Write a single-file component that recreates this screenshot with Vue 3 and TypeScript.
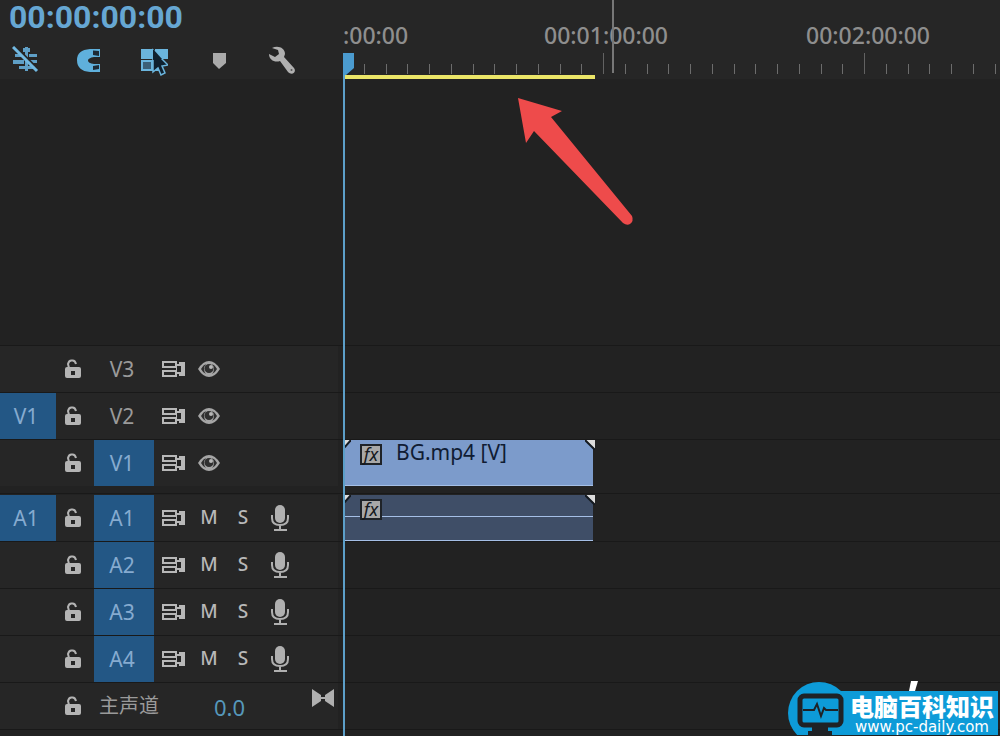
<script setup lang="ts">
interface Track {
  name: string
  kind: 'video' | 'audio'
  source?: string
  targeted: boolean
  clip?: string
  hasClip?: boolean
}

const videoTracks: Track[] = [
  { name: 'V3', kind: 'video', targeted: false },
  { name: 'V2', kind: 'video', source: 'V1', targeted: false },
  { name: 'V1', kind: 'video', targeted: true, hasClip: true, clip: 'BG.mp4 [V]' },
]

const audioTracks: Track[] = [
  { name: 'A1', kind: 'audio', source: 'A1', targeted: true, hasClip: true },
  { name: 'A2', kind: 'audio', targeted: true },
  { name: 'A3', kind: 'audio', targeted: true },
  { name: 'A4', kind: 'audio', targeted: true },
]

const groups = [
  { id: 'video', tracks: videoTracks },
  { id: 'audio', tracks: audioTracks },
]

const rulerLabels = [':00:00', '00:01:00:00', '00:02:00:00']

// Twelve divisions per minute, one minute is 261 units wide
const ticks = Array.from({ length: 110 }, (_, i) => ({
  x: Math.round(((i + 1) * 261) / 12) - 1,
  major: (i + 1) % 12 === 0,
}))
</script>

<template>
  <main class="timeline">
    <header class="top">
      <div class="controls">
        <div class="timecode">00:00:00:00</div>
        <div class="toolbar">
          <button type="button" aria-label="Insert as nests">
            <svg width="28" height="28" viewBox="0 0 28 28">
              <g fill="#5f9fc6">
                <rect x="13" y="1" width="3" height="24" />
                <rect x="11" y="2" width="7" height="4" />
                <rect x="3" y="8" width="7" height="3" />
                <rect x="17" y="8" width="8" height="3" />
                <rect x="1" y="14" width="11" height="4" />
                <rect x="17" y="14" width="8" height="3" />
                <rect x="7" y="20" width="16" height="3" />
              </g>
              <path d="M4 1 28 25" stroke="#262626" stroke-width="2" />
              <path d="M1 1 25 25" stroke="#72b9e2" stroke-width="3" />
            </svg>
          </button>
          <button type="button" aria-label="Snap">
            <svg width="28" height="28" viewBox="0 0 28 28">
              <path d="M24 3H14Q1 4 1 14Q1 25 14 26H24V18H18Q12 17 12 14.500Q12 12 18 11H24Z" fill="#5fb0dc" />
              <path d="M17 4.500 23 5V10L17 9ZM17 20 23 19V23L17 24Z" fill="#1d2a35" />
            </svg>
          </button>
          <button type="button" aria-label="Linked selection">
            <svg width="28" height="30" viewBox="0 0 28 30">
              <path d="M1 3H14V13H1ZM15 3H28V13H15Z" fill="#6bb5dd" />
              <path d="M2 15H12V24H2Z" fill="#3c6077" stroke="#6bb5dd" stroke-width="2" />
              <path d="M13 14H20V25H13Z" fill="#6bb5dd" />
              <path d="M13 4V26L18 22L21 29L25 27L22 20L28 19Z" fill="#10212f" stroke="#6bb5dd" stroke-width="1.500" />
              <path d="M13 3V14L22 13Z" fill="#10212f" />
            </svg>
          </button>
          <button type="button" aria-label="Add marker">
            <svg width="28" height="28" viewBox="0 0 28 28">
              <path d="M9 7H22V17L15 23L9 17Z" fill="#aaaaaa" />
            </svg>
          </button>
          <button type="button" aria-label="Timeline settings">
            <svg width="28" height="28" viewBox="0 0 28 28">
              <path
                d="M4 2C10-1 17 2 17 8L16 11L26 22C29 26 24 30 20 26L12 15C7 17 1 14 1 8L7 11L11 8L10 4Z"
                fill="#b0b0b0"
              />
              <circle cx="23.500" cy="24" r="1" fill="#555555" />
            </svg>
          </button>
        </div>
      </div>
      <div class="ruler">
        <div class="labels">
          <span v-for="label in rulerLabels" :key="label">{{ label }}</span>
        </div>
        <svg class="ticks" height="22" aria-hidden="true">
          <rect
            v-for="tick in ticks"
            :key="tick.x"
            :x="tick.x"
            :y="tick.major ? 1 : 12"
            width="1"
            :height="tick.major ? 21 : 10"
            :fill="tick.major ? '#626262' : '#6c6c6c'"
          />
        </svg>
        <div class="work-area"></div>
        <div class="hover-line"></div>
      </div>
    </header>

    <div class="empty"></div>

    <section v-for="group in groups" :key="group.id" class="group">
      <div v-for="track in group.tracks" :key="track.name" class="row">
        <div class="head">
          <button v-if="track.source" type="button" class="source">{{ track.source }}</button>
          <span v-else></span>
          <button type="button" class="tool" aria-label="Lock track">
            <svg width="16" height="20" viewBox="0 0 16 20">
              <path d="M4 9L3 5Q4 1 7 1.500Q10 1 11 5" fill="none" stroke="#b4b4b4" stroke-width="2" />
              <path fill-rule="evenodd" d="M2 8H14Q16 8 16 10V17Q16 19 14 19H2Q0 19 0 17V10Q0 8 2 8ZM6 12V16H10V12Z" fill="#b4b4b4" />
            </svg>
          </button>
          <button type="button" class="target" :class="{ on: track.targeted }">{{ track.name }}</button>
          <button type="button" class="tool" aria-label="Sync lock">
            <svg width="24" height="18" viewBox="0 0 24 18">
              <path d="M2 2H15V7H2ZM2 11H15V16H2Z" fill="none" stroke="#b8b8b8" stroke-width="2" />
              <path fill-rule="evenodd" d="M15 4H18V2H24V16H18V14H15ZM16 6V12H20V6Z" fill="#b8b8b8" />
            </svg>
          </button>
          <template v-if="track.kind === 'video'">
            <button type="button" class="tool" aria-label="Toggle track output">
              <svg width="24" height="18" viewBox="0 0 24 18">
                <path d="M1 9Q6 1 12 1Q18 1 23 9Q18 17 12 17Q6 17 1 9Z" fill="#a6a6a6" />
                <path d="M4 9Q6 5 9 4Q5 9 9 14Q6 13 4 9ZM20 9Q18 5 15 4Q19 9 15 14Q18 13 20 9Z" fill="#303030" />
                <circle cx="12" cy="8.500" r="4.500" fill="#303030" />
                <circle cx="14" cy="7" r="2" fill="#b8b8b8" />
              </svg>
            </button>
          </template>
          <template v-else>
            <button type="button" class="tool letter">M</button>
            <button type="button" class="tool letter">S</button>
            <button type="button" class="tool" aria-label="Voice-over record">
              <svg width="18" height="28" viewBox="0 0 18 28">
                <rect x="4" y="1" width="10" height="18" rx="5" fill="#b0b0b0" />
                <path d="M1 11V14Q1 21 9 21Q17 21 17 14V11M9 21V26M3 26H16" fill="none" stroke="#b0b0b0" stroke-width="2" />
              </svg>
            </button>
          </template>
        </div>
        <div class="lane">
          <div v-if="track.hasClip" class="clip" :class="track.kind">
            <span class="fx">fx</span>
            <span v-if="track.clip" class="clip-name">{{ track.clip }}</span>
            <svg class="corner start" width="7" height="8" viewBox="0 0 7 8">
              <path d="M0 0H6L0 7Z" fill="#dcdcdc" />
              <path d="M7 0 0 8" stroke="#151a20" stroke-width="2" />
            </svg>
            <svg class="corner end" width="10" height="10" viewBox="0 0 10 10">
              <path d="M1 0H10V9Z" fill="#dcdcdc" />
              <path d="M0 0 10 10" stroke="#151a20" stroke-width="2" />
            </svg>
          </div>
        </div>
      </div>
    </section>

    <div class="row master">
      <div class="head">
        <span></span>
        <button type="button" class="tool" aria-label="Lock master track">
          <svg width="16" height="20" viewBox="0 0 16 20">
            <path d="M4 9L3 5Q4 1 7 1.500Q10 1 11 5" fill="none" stroke="#b4b4b4" stroke-width="2" />
            <path fill-rule="evenodd" d="M2 8H14Q16 8 16 10V17Q16 19 14 19H2Q0 19 0 17V10Q0 8 2 8ZM6 12V16H10V12Z" fill="#b4b4b4" />
          </svg>
        </button>
        <span class="master-name">主声道</span>
        <span class="level">0.0</span>
        <button type="button" class="tool meter" aria-label="Show keyframes">
          <svg width="22" height="18" viewBox="0 0 22 18">
            <path d="M0 0 9 6V12L0 18ZM22 0 13 6V12L22 18Z" fill="#b0b0b0" />
            <path d="M8 9H14" stroke="#b0b0b0" stroke-width="2" />
          </svg>
        </button>
      </div>
      <div class="lane"></div>
    </div>
    <div class="foot"></div>

    <div class="playhead" aria-hidden="true">
      <svg width="12" height="22" viewBox="0 0 12 22">
        <path d="M0 0H11V15L3 22H0Z" fill="#4b9bcf" />
      </svg>
    </div>

    <svg class="arrow" width="120" height="132" viewBox="0 0 120 132" aria-hidden="true">
      <path d="M3 3 47 16 36 22 117 121Q119 126 115 129Q112 131 108 128L19 36 11 48Z" fill="#ee4b4b" />
    </svg>

    <aside class="watermark">
      <svg class="logo" width="60" height="54" viewBox="0 0 60 54" aria-hidden="true">
        <circle cx="31" cy="32" r="31" fill="#0d9bd8" />
        <rect x="12" y="15" width="41" height="29" rx="4" fill="#0d9bd8" stroke="#1f2226" stroke-width="5" />
        <path d="M24 44H40V50H44V54H20V50H24Z" fill="#1f2226" />
        <path d="M15 29H26L29 23L33 35L36 27L38 29H50" fill="none" stroke="#1f2226" stroke-width="2" />
      </svg>
      <div class="banner">
        <strong>电脑百科知识</strong>
        <a href="#">www.pc-daily.com</a>
      </div>
      <svg class="slash" width="9" height="10" viewBox="0 0 9 10" aria-hidden="true">
        <path d="M2 0H9L6 10H0Z" fill="#ffffff" />
      </svg>
    </aside>
  </main>
</template>

<style>
body {
  margin: 0;
  background: #222222;
}
</style>

<style scoped>
.timeline {
  position: relative;
  display: flex;
  flex-direction: column;
  min-height: 100vh;
  background: #222222;
  color: #9a9a9a;
  font-family: "Noto Sans", "Noto Sans CJK SC", sans-serif;
}
button {
  margin: 0;
  padding: 0;
  border: 0;
  background: none;
  color: inherit;
  font: inherit;
}
svg {
  display: block;
}
.top {
  display: grid;
  grid-template-columns: 343px 1fr;
  height: 79px;
  background: #262626;
}
.timecode {
  padding-left: 9px;
  color: #66a7d3;
  font-family: Roboto, "Noto Sans", sans-serif;
  font-size: 32px;
  font-weight: 700;
  line-height: 34px;
}
.toolbar {
  display: flex;
  gap: 36px;
  padding: 12px 0 0 12px;
}
.toolbar button {
  width: 28px;
  height: 28px;
}
.ruler {
  position: relative;
  display: flex;
  flex-direction: column;
  min-width: 0;
  overflow: hidden;
}
.labels {
  display: flex;
  padding-top: 19px;
  color: #8e8e8e;
  font-size: 23px;
  font-weight: 500;
  line-height: 33px;
  white-space: nowrap;
}
.labels span {
  flex: 0 0 262px;
}
.labels span:first-child {
  flex-basis: 201px;
}
.ticks {
  width: 100%;
}
.work-area {
  width: 250px;
  height: 4px;
  margin: 1px 0 0 2px;
  background: #ebe568;
}
.hover-line {
  position: absolute;
  top: 0;
  left: 269px;
  width: 2px;
  height: 73px;
  background: #777777;
}
.empty {
  flex: 1;
  min-height: 40px;
}
.group + .group {
  margin-top: 7px;
  border-top: 1px solid #191919;
}
.row {
  display: grid;
  grid-template-columns: 343px 1fr;
  height: 46px;
  border-top: 1px solid #191919;
}
.group + .group .row:first-child {
  border-top-color: #222222;
}
.head {
  display: grid;
  grid-template-columns: 56px 34px 64px 38px 34px 34px 40px;
  margin-right: 5px;
  background: #262626;
}
.lane {
  background: #222222;
  min-width: 0;
}
.source,
.target {
  font-size: 21px;
  line-height: 46px;
}
.source,
.target.on {
  background: #235785;
  color: #86abd0;
}
.source {
  padding-right: 4px;
}
.target {
  margin-left: 4px;
  padding-right: 4px;
}
.tool {
  display: flex;
  align-items: center;
  justify-content: center;
}
.letter {
  color: #b8b8b8;
  font-size: 19px;
  font-weight: 500;
  line-height: 44px;
  align-items: flex-start;
}
.clip {
  position: relative;
  display: flex;
  gap: 14px;
  width: 249px;
  height: 46px;
  margin-left: 1px;
  padding-left: 16px;
  box-sizing: border-box;
  border-bottom: 1px solid #a5bfe6;
}
.clip.video {
  background: #7c9bcb;
}
.clip.audio {
  background: linear-gradient(#a5bfe6, #a5bfe6) 0 21px / 100% 1px no-repeat #3f4e67;
}
.fx {
  width: 18px;
  height: 17px;
  margin-top: 4px;
  border: 2px solid #1f2328;
  background: #a8a8a8;
  color: #15181c;
  font-size: 18px;
  font-style: italic;
  line-height: 16px;
  text-align: center;
}
.clip-name {
  color: #101c33;
  font-size: 21px;
  line-height: 24px;
}
.corner {
  position: absolute;
  top: 0;
}
.corner.start {
  left: 0;
}
.corner.end {
  right: -2px;
}
.master .head {
  grid-template-columns: 56px 34px 124px 98px 22px;
}
.master-name {
  padding-left: 9px;
  font-size: 20px;
  line-height: 46px;
}
.level {
  padding-top: 2px;
  color: #5698bb;
  font-size: 22px;
  line-height: 44px;
}
.meter {
  align-items: flex-start;
  padding-top: 6px;
}
.foot {
  height: 7px;
  border-top: 1px solid #191919;
  box-sizing: border-box;
}
.playhead {
  position: absolute;
  top: 53px;
  bottom: 0;
  left: 343px;
  width: 12px;
  background: linear-gradient(#5c9fc9, #5c9fc9) 0 0 / 2px 100% no-repeat;
}
.arrow {
  position: absolute;
  top: 95px;
  left: 515px;
}
.watermark {
  position: absolute;
  right: 2px;
  bottom: 1px;
  display: flex;
  align-items: flex-end;
  color: #ffffff;
}
.banner {
  display: flex;
  flex-direction: column;
  height: 44px;
  margin-left: -8px;
  padding: 0 4px 0 10px;
  background: #0d9bd8;
  box-sizing: border-box;
}
.logo {
  position: relative;
}
.banner strong {
  font-family: "Noto Sans CJK SC", sans-serif;
  font-size: 24px;
  font-weight: 900;
  line-height: 29px;
}
.banner a {
  color: #ffffff;
  font-family: "DejaVu Sans", sans-serif;
  font-size: 15px;
  line-height: 14px;
  text-align: center;
  text-decoration: none;
}
.slash {
  position: absolute;
  top: 0;
  right: 80px;
}
</style>
